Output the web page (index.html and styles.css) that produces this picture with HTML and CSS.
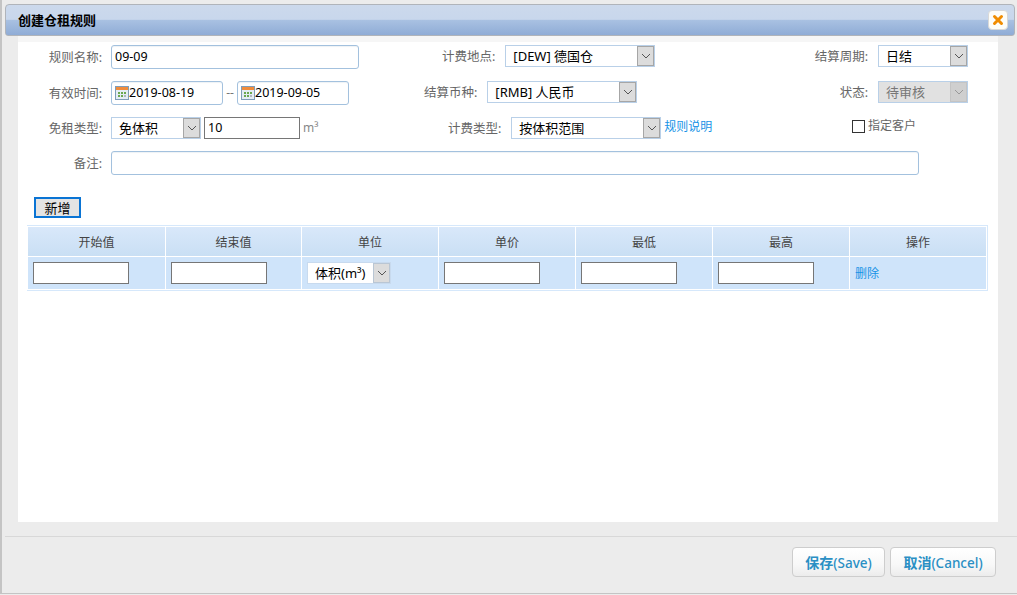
FILE: index.html
```html
<!DOCTYPE html>
<html lang="zh">
<head>
<meta charset="utf-8">
<title>创建仓租规则</title>
<link rel="stylesheet" href="styles.css">
</head>
<body>
<div class="dialog">
  <header class="titlebar">
    <h1 class="title">创建仓租规则</h1>
    <button class="close" type="button" aria-label="关闭">
      <svg width="12" height="12" viewBox="0 0 12 12"><path d="M2.5 2.5 9.5 9.5M9.5 2.5 2.5 9.5" stroke="#f08c00" stroke-width="3" stroke-linecap="round"/></svg>
    </button>
  </header>
  <main class="content">
    <div class="form-row">
      <div class="col col-a"><label class="lbl">规则名称:</label><div class="field name-field">09-09</div></div>
      <div class="col col-b off-1"><label class="lbl">计费地点:</label>
        <div class="sel w150"><span class="sel-text">[DEW] 德国仓</span><span class="arrow"><svg width="10" height="6" viewBox="0 0 10 6"><path d="M1 1l4 4 4-4" fill="none" stroke="#555"/></svg></span></div></div>
      <div class="col col-c"><label class="lbl">结算周期:</label>
        <div class="sel w90"><span class="sel-text">日结</span><span class="arrow"><svg width="10" height="6" viewBox="0 0 10 6"><path d="M1 1l4 4 4-4" fill="none" stroke="#555"/></svg></span></div></div>
    </div>
    <div class="form-row">
      <div class="col col-a"><label class="lbl">有效时间:</label>
        <div class="field date"><svg class="cal" width="14" height="14" viewBox="0 0 14 14"><rect x=".5" y=".5" width="13" height="13" fill="#e4edf5" stroke="#7f9db9"/><rect x="1" y="1" width="12" height="3" fill="#f08c3c"/><path d="M3 6h2v2H3zM6 6h2v2H6zM9 6h2v2H9zM3 9h2v2H3zM6 9h2v2H6z" fill="#6aa84f"/><path d="M9 9h2v2H9z" fill="#b0b8c0"/></svg>2019-08-19</div>
        <span class="dash">--</span>
        <div class="field date"><svg class="cal" width="14" height="14" viewBox="0 0 14 14"><rect x=".5" y=".5" width="13" height="13" fill="#e4edf5" stroke="#7f9db9"/><rect x="1" y="1" width="12" height="3" fill="#f08c3c"/><path d="M3 6h2v2H3zM6 6h2v2H6zM9 6h2v2H9zM3 9h2v2H3zM6 9h2v2H6z" fill="#6aa84f"/><path d="M9 9h2v2H9z" fill="#b0b8c0"/></svg>2019-09-05</div>
      </div>
      <div class="col col-b off-2"><label class="lbl">结算币种:</label>
        <div class="sel w150"><span class="sel-text">[RMB] 人民币</span><span class="arrow"><svg width="10" height="6" viewBox="0 0 10 6"><path d="M1 1l4 4 4-4" fill="none" stroke="#555"/></svg></span></div></div>
      <div class="col col-c"><label class="lbl">状态:</label>
        <div class="sel w90 disabled"><span class="sel-text">待审核</span><span class="arrow"><svg width="10" height="6" viewBox="0 0 10 6"><path d="M1 1l4 4 4-4" fill="none" stroke="#999"/></svg></span></div></div>
    </div>
    <div class="form-row row-short">
      <div class="col col-a"><label class="lbl">免租类型:</label>
        <div class="sel w90"><span class="sel-text">免体积</span><span class="arrow"><svg width="10" height="6" viewBox="0 0 10 6"><path d="M1 1l4 4 4-4" fill="none" stroke="#555"/></svg></span></div>
        <div class="plain free-val">10</div><span class="unit">m³</span></div>
      <div class="col col-b off-3"><label class="lbl">计费类型:</label>
        <div class="sel w150"><span class="sel-text">按体积范围</span><span class="arrow"><svg width="10" height="6" viewBox="0 0 10 6"><path d="M1 1l4 4 4-4" fill="none" stroke="#555"/></svg></span></div>
        <a class="link rule-link">规则说明</a></div>
      <div class="col col-c check-col"><span class="check"></span><span class="check-label">指定客户</span></div>
    </div>
    <div class="form-row">
      <div class="col col-full"><label class="lbl">备注:</label><div class="field remark"></div></div>
    </div>
    <div class="toolbar"><button class="add" type="button">新增</button></div>
    <table class="grid">
      <thead>
        <tr><th class="col-first">开始值</th><th class="col-second">结束值</th><th>单位</th><th>单价</th><th>最低</th><th>最高</th><th>操作</th></tr>
      </thead>
      <tbody>
        <tr>
          <td><div class="plain cell-input"></div></td>
          <td><div class="plain cell-input"></div></td>
          <td><div class="sel unit-sel"><span class="sel-text">体积(m³)</span><span class="arrow"><svg width="10" height="6" viewBox="0 0 10 6"><path d="M1 1l4 4 4-4" fill="none" stroke="#555"/></svg></span></div></td>
          <td><div class="plain cell-input"></div></td>
          <td><div class="plain cell-input"></div></td>
          <td><div class="plain cell-input"></div></td>
          <td><a class="link">删除</a></td>
        </tr>
      </tbody>
    </table>
  </main>
  <footer class="footer">
    <button class="btn btn-save" type="button"><span class="btn-cjk">保存</span>(Save)</button>
    <button class="btn btn-cancel" type="button"><span class="btn-cjk">取消</span>(Cancel)</button>
  </footer>
</div>
</body>
</html>
```

FILE: styles.css
```css
* { box-sizing: border-box; }
html, body { margin: 0; height: 100%; }
body {
  background: #ececec;
  font-family: "Noto Sans", "Noto Sans CJK SC", sans-serif;
  font-size: 12px;
  color: #000;
  overflow: hidden;
}
.dialog {
  height: 594px; padding-top: 4px; display: flex; flex-direction: column;
  border-left: 2px solid #c4c4c4; border-bottom: 1px solid #c4c4c4;
}
.titlebar {
  margin: 0 2px 0 3px;
  height: 32px;
  flex: none;
  border: 1px solid #b0b4ba;
  border-radius: 4px 4px 3px 3px;
  background: linear-gradient(#ccd9ec 0, #c8d7ec 48%, #a9c1e2 50%, #8facd6 100%);
  display: flex;
  align-items: center;
  justify-content: space-between;
  padding: 0 6px 0 12px;
}
.title { margin: 0; font-size: 13px; font-weight: 700; line-height: 20px; color: #000; }
.close {
  width: 20px; height: 20px; padding: 0;
  border: 1px solid #d8d8d8; border-radius: 4px;
  background: #fdfdf8;
  display: flex; align-items: center; justify-content: center;
}
.content {
  margin: 6px 19px 0 16px;
  height: 480px;
  flex: none;
  background: #fff;
  padding-top: 3px;
  box-shadow: 0 -6px 0 #f6f6f6;
}
.form-row { display: grid; grid-template-columns: 382px 404px 194px; height: 36px; }
.row-short { height: 34px; }
.col { display: flex; align-items: flex-start; }
.lbl {
  flex: none; color: #666; font-size: 12.5px; line-height: 25px; text-align: right; white-space: nowrap;
}
.col-a .lbl { width: 84px; margin-right: 9px; }
.row-short .lbl { line-height: 23px; }
.col-full { grid-column: 1 / -1; }
.col-full .lbl { width: 84px; margin-right: 9px; }
.col-b .lbl { margin-right: 10px; line-height: 24px; }
.col-c .lbl { width: 64px; margin-right: 10px; line-height: 24px; }
.off-1 { padding-left: 42px; }
.off-2 { padding-left: 24px; }
.off-3 { padding-left: 48px; }
.field {
  height: 24px; border: 1px solid #a3c1de; border-radius: 3px; background: #fff;
  line-height: 22px; padding-left: 3px; font-size: 12.5px; box-shadow: inset 0 1px 1px #eef2f6;
}
.name-field { width: 248px; }
.date { width: 112px; display: flex; align-items: center; gap: 0; padding-left: 3px; }
.cal { flex: none; }
.dash { width: 14px; text-align: center; line-height: 24px; color: #777; }
.remark { width: 808px; }
.sel {
  height: 22px; border: 1px solid #b9d0e8; background: #fff; display: flex;
  align-items: stretch; flex: none;
}
.sel-text { flex: 1; padding-left: 7px; font-size: 13px; line-height: 20px; white-space: nowrap; overflow: hidden; }
.arrow {
  flex: none; width: 17px; background: #dcdcdc; border: 1px solid #a6a6a6;
  display: flex; align-items: center; justify-content: center;
}
.w150 { width: 150px; }
.w90 { width: 90px; }
.disabled { background: #e1e1e1; color: #777; }
.disabled .arrow { background: #cfcfcf; border-color: #c4c4c4; }
.plain { height: 22px; border: 1px solid #767676; background: #fff; font-size: 12.5px; line-height: 20px; padding-left: 3px; }
.free-val { width: 96px; margin-left: 3px; }
.unit { color: #888; font-size: 12px; margin-left: 3px; line-height: 22px; }
.link { color: #1592e6; font-size: 12px; cursor: pointer; }
.rule-link { margin-left: 3px; line-height: 20px; }
.check-col { padding-left: 48px; }
.check { width: 13px; height: 13px; border: 1px solid #333; background: #fff; margin-top: 3px; flex: none; }
.check-label { color: #666; font-size: 12px; line-height: 18px; margin-left: 3px; }
.toolbar { padding: 10px 0 0 16px; height: 38px; }
.add {
  width: 47px; height: 21px; padding: 0; display: block;
  border: 2px solid #0a74d4; background: #e4e4e4; font: 13px/17px "Noto Sans CJK SC", sans-serif; color: #000;
}
.grid {
  margin-left: 9px; width: 961px; border-collapse: separate; border-spacing: 1px;
  background: #fff; table-layout: fixed; border: 1px solid #d6e8fb; border-left: 0;
}
.grid th {
  height: 29px; padding: 0; font-weight: 400; font-size: 12px; color: #444;
  background: linear-gradient(#d9e8fa, #c9dff4);
}
.grid .col-first { width: 137px; }
.grid .col-second { width: 135px; }
.grid td { height: 32px; padding: 0 0 0 5px; background: #cfe4fa; }
.cell-input { width: 96px; }
.unit-sel { width: 84px; border-color: #c8daee; }
.unit-sel .sel-text { padding-left: 7px; }
.unit-sel .arrow { border-color: #b9c6d4; }
.footer {
  margin: 14px 0 0 3px; border-top: 1px solid #d8d8d8; padding: 10px 21px 0 0;
  display: flex; justify-content: flex-end; gap: 5px;
}
.btn {
  height: 30px; padding: 0; border: 1px solid #cdcdcd; border-radius: 4px;
  background: linear-gradient(#fff, #f8f8f8 60%, #ececec);
  color: #2a8fc4; font-size: 13.5px; font-weight: 500; font-family: "Noto Sans", "Noto Sans CJK SC", sans-serif;
}
.btn-cjk { font-size: 14px; font-weight: 700; }
.btn-save { width: 93px; }
.btn-cancel { width: 106px; }
```
